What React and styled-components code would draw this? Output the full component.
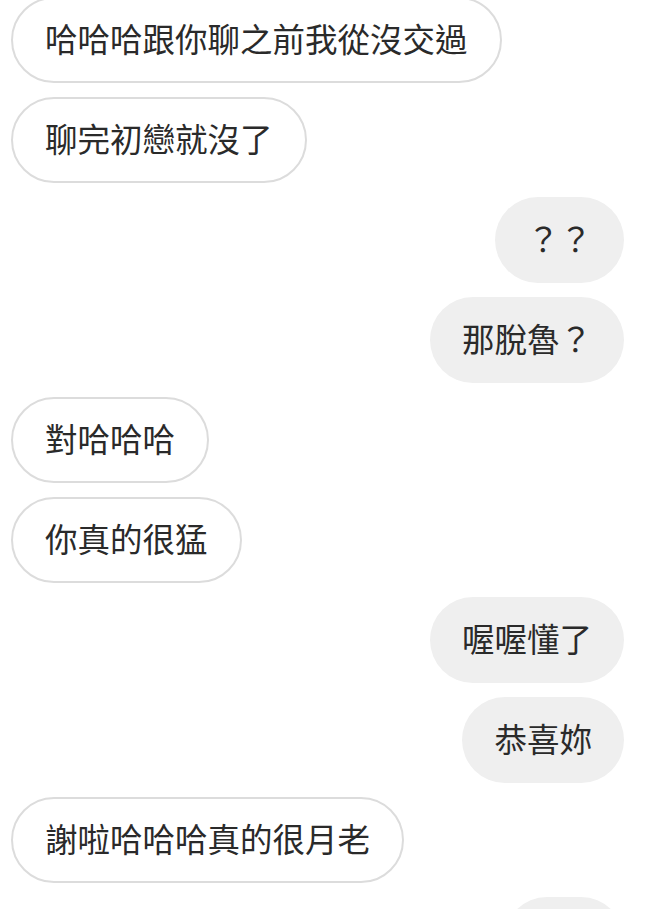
import React from "react";
import styled, { createGlobalStyle } from "styled-components";

const Global = createGlobalStyle`
  html, body { margin: 0; padding: 0; background: #ffffff; }
  body { font-family: "Noto Sans CJK TC", "Noto Sans", sans-serif; overflow: hidden; }
`;

const Thread = styled.div`
  display: flex;
  flex-direction: column;
  gap: 14px;
  margin-top: -3px;
  padding: 0 25px 0 11px;
  height: 912px;
  overflow: hidden;
  box-sizing: border-box;
`;

const Row = styled.div`
  display: flex;
  justify-content: ${(p) => (p.$mine ? "flex-end" : "flex-start")};
`;

const Bubble = styled.div`
  box-sizing: border-box;
  height: 86px;
  padding: 0 32px 4px;
  display: flex;
  align-items: center;
  border-radius: 43px;
  font-size: 32.5px;
  line-height: 44px;
  color: #2a2a2a;
  white-space: nowrap;
  background: ${(p) => (p.$mine ? "#efefef" : "#ffffff")};
  border: ${(p) => (p.$mine ? "none" : "2px solid #dcdcdc")};
`;

const PartialBubble = styled(Bubble)`
  width: 120px;
`;

const messages = [
  { mine: false, text: "哈哈哈跟你聊之前我從沒交過" },
  { mine: false, text: "聊完初戀就沒了" },
  { mine: true, text: "？？" },
  { mine: true, text: "那脫魯？" },
  { mine: false, text: "對哈哈哈" },
  { mine: false, text: "你真的很猛" },
  { mine: true, text: "喔喔懂了" },
  { mine: true, text: "恭喜妳" },
  { mine: false, text: "謝啦哈哈哈真的很月老" },
];

export default function App() {
  return (
    <>
      <Global />
      <Thread>
        {messages.map((m, i) => (
          <Row key={i} $mine={m.mine}>
            <Bubble $mine={m.mine}>{m.text}</Bubble>
          </Row>
        ))}
        <Row $mine>
          <PartialBubble $mine />
        </Row>
      </Thread>
    </>
  );
}
